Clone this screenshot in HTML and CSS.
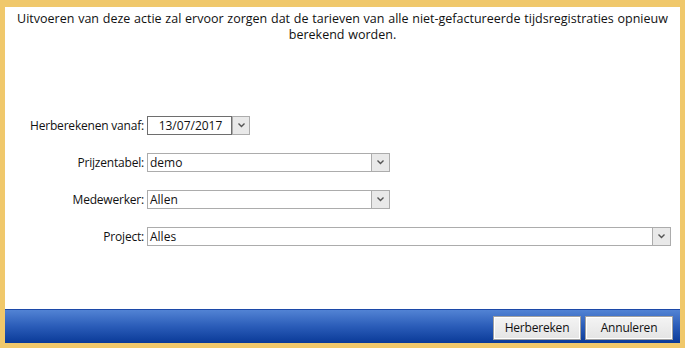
FILE: index.html
```html
<!DOCTYPE html>
<html lang="nl">
<head>
    <meta charset="UTF-8">
    <title>Tarieven herberekenen</title>
    <link rel="stylesheet" href="styles.css">
</head>
<body>
    <div class="window">
        <div class="content">
            <p class="intro">Uitvoeren van deze actie zal ervoor zorgen dat de tarieven van alle niet-gefactureerde tijdsregistraties opnieuw berekend worden.</p>

            <div class="form">
                <label class="label">Herberekenen vanaf:</label>
                <div class="field">
                    <div class="date-box">13/07/2017</div>
                    <div class="drop-btn">
                        <svg width="7" height="5" viewBox="0 0 7 5"><path d="M0.5 0.5 L3.5 3.5 L6.5 0.5" fill="none" stroke="#555" stroke-width="1.4"/></svg>
                    </div>
                </div>

                <label class="label">Prijzentabel:</label>
                <div class="field">
                    <div class="select small">
                        <span class="value">demo</span>
                        <div class="drop-btn">
                            <svg width="7" height="5" viewBox="0 0 7 5"><path d="M0.5 0.5 L3.5 3.5 L6.5 0.5" fill="none" stroke="#555" stroke-width="1.4"/></svg>
                        </div>
                    </div>
                </div>

                <label class="label">Medewerker:</label>
                <div class="field">
                    <div class="select small">
                        <span class="value">Allen</span>
                        <div class="drop-btn">
                            <svg width="7" height="5" viewBox="0 0 7 5"><path d="M0.5 0.5 L3.5 3.5 L6.5 0.5" fill="none" stroke="#555" stroke-width="1.4"/></svg>
                        </div>
                    </div>
                </div>

                <label class="label">Project:</label>
                <div class="field">
                    <div class="select wide">
                        <span class="value">Alles</span>
                        <div class="drop-btn">
                            <svg width="7" height="5" viewBox="0 0 7 5"><path d="M0.5 0.5 L3.5 3.5 L6.5 0.5" fill="none" stroke="#555" stroke-width="1.4"/></svg>
                        </div>
                    </div>
                </div>
            </div>
        </div>

        <!-- Footer with actions -->
        <div class="footer">
            <button class="btn">Herbereken</button>
            <button class="btn">Annuleren</button>
        </div>
    </div>
</body>
</html>
```

FILE: styles.css
```css
* {
    margin: 0;
    padding: 0;
    box-sizing: border-box;
}

body {
    background: #f0c86b;
    font-family: 'Open Sans', 'Noto Sans', sans-serif;
    font-size: 12px;
    color: #111;
}

.window {
    width: 685px;
    height: 348px;
    border-style: solid;
    border-color: #f0c86b;
    border-width: 7px 5px 5px 5px;
    display: flex;
    flex-direction: column;
}

.content {
    flex: 1;
    background: #fff;
}

.intro {
    text-align: center;
    line-height: 16px;
    padding: 4px 6px 0 6px;
    font-size: 12.5px;
    word-spacing: 0.5px;
}

/* Form grid */
.form {
    display: grid;
    grid-template-columns: 139px 1fr;
    column-gap: 3px;
    row-gap: 18px;
    grid-auto-rows: 19px;
    margin-top: 73px;
}

.label {
    text-align: right;
    line-height: 19px;
    letter-spacing: -0.2px;
}

.field {
    display: flex;
    align-items: stretch;
}

.date-box {
    width: 85px;
    border: 1px solid #6e6e6e;
    text-align: center;
    line-height: 17px;
    padding-left: 2px;
}

.drop-btn {
    width: 18px;
    background: #e9e9e9;
    border: 1px solid #acacac;
    display: flex;
    align-items: center;
    justify-content: center;
}

.select {
    display: flex;
    border: 1px solid #acacac;
    background: #fff;
}

.select .drop-btn {
    border-width: 0 0 0 1px;
}

.select.small {
    width: 243px;
}

.select.wide {
    width: 524px;
}

.value {
    flex: 1;
    line-height: 17px;
    padding-left: 2px;
}

/* Footer */
.footer {
    height: 34px;
    background: linear-gradient(#5283d4, #2a5cb8 50%, #0a3a98);
    border-top: 1px solid #1c49a8;
    display: flex;
    justify-content: flex-end;
    align-items: center;
    gap: 4px;
    padding-right: 7px;
    padding-top: 2px;
}

.btn {
    width: 88px;
    height: 24px;
    font-family: 'Open Sans', 'Noto Sans', sans-serif;
    font-size: 12px;
    color: #111;
    background: linear-gradient(#f4f4f4, #e4e4e4);
    border: 1px solid #a0a0a0;
    box-shadow: inset 0 0 0 1px #fff;
    letter-spacing: -0.2px;
}
```
